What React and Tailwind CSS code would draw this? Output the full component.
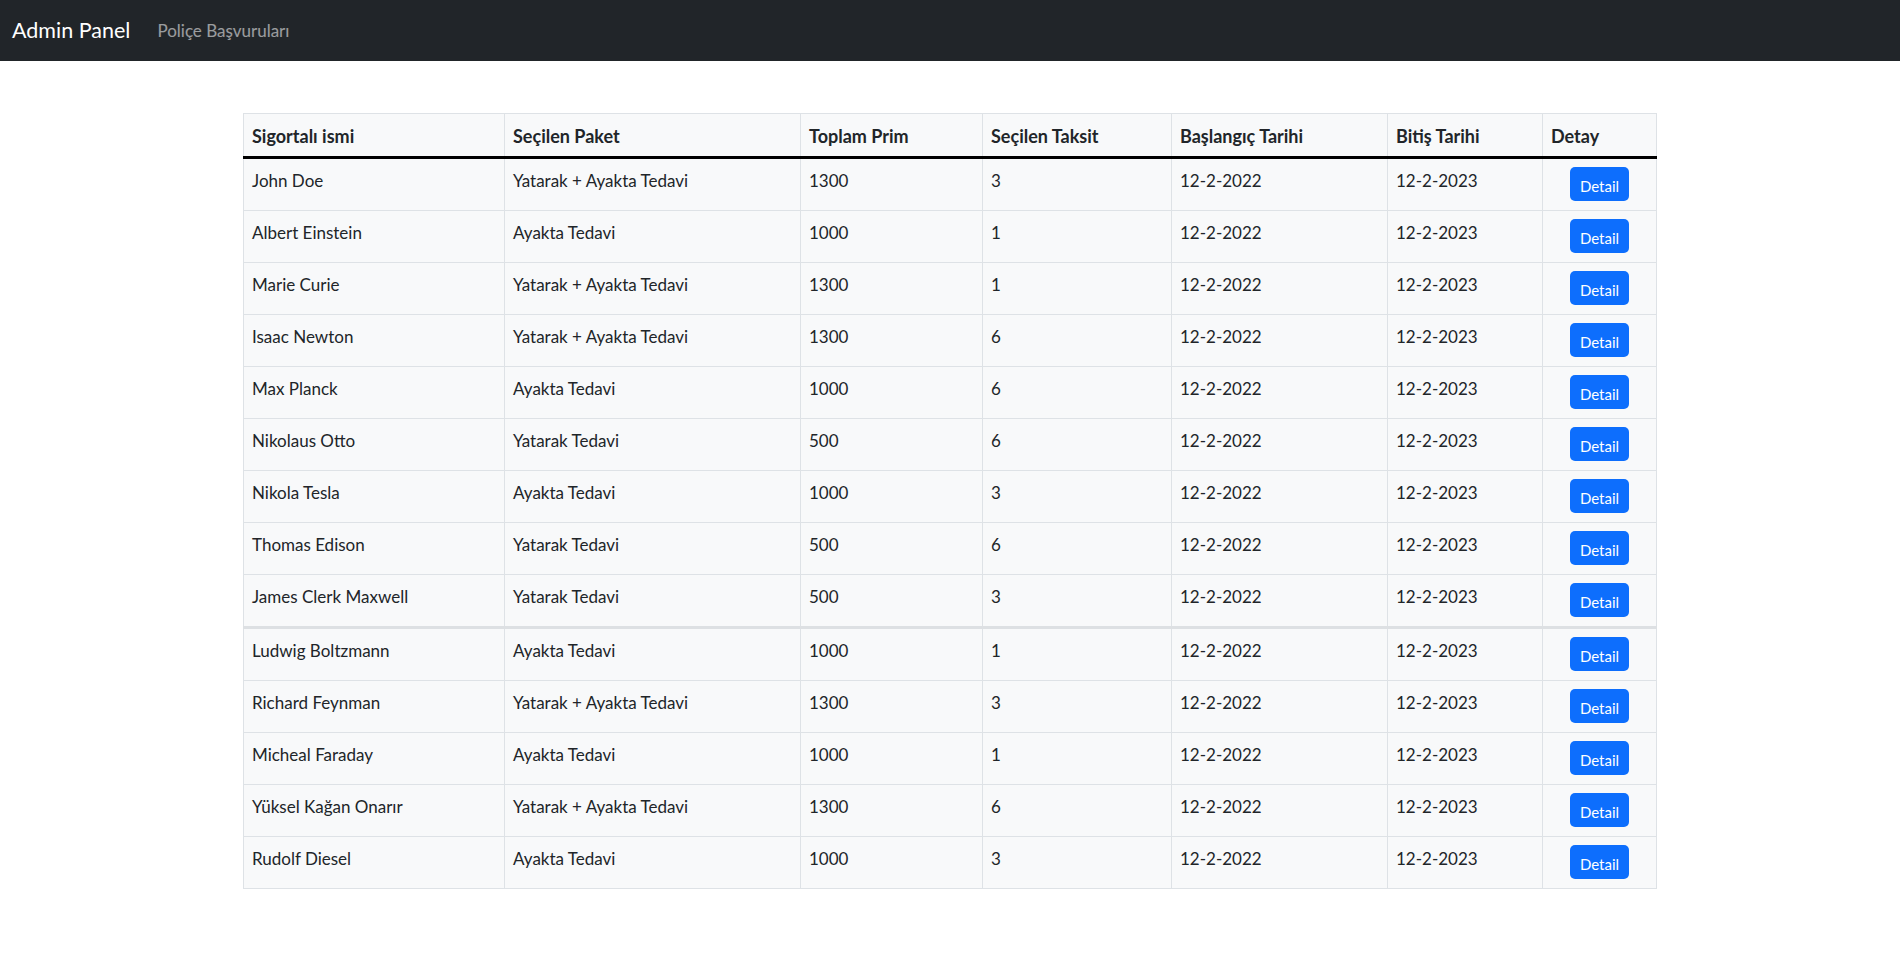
const ROWS = [
  ["John Doe", "Yatarak + Ayakta Tedavi", "1300", "3"],
  ["Albert Einstein", "Ayakta Tedavi", "1000", "1"],
  ["Marie Curie", "Yatarak + Ayakta Tedavi", "1300", "1"],
  ["Isaac Newton", "Yatarak + Ayakta Tedavi", "1300", "6"],
  ["Max Planck", "Ayakta Tedavi", "1000", "6"],
  ["Nikolaus Otto", "Yatarak Tedavi", "500", "6"],
  ["Nikola Tesla", "Ayakta Tedavi", "1000", "3"],
  ["Thomas Edison", "Yatarak Tedavi", "500", "6"],
  ["James Clerk Maxwell", "Yatarak Tedavi", "500", "3"],
  ["Ludwig Boltzmann", "Ayakta Tedavi", "1000", "1"],
  ["Richard Feynman", "Yatarak + Ayakta Tedavi", "1300", "3"],
  ["Micheal Faraday", "Ayakta Tedavi", "1000", "1"],
  ["Yüksel Kağan Onarır", "Yatarak + Ayakta Tedavi", "1300", "6"],
  ["Rudolf Diesel", "Ayakta Tedavi", "1000", "3"],
];

const HEADERS = [
  ["Sigortalı ismi", "w-[261px]"],
  ["Seçilen Paket", "w-[296px]"],
  ["Toplam Prim", "w-[182px]"],
  ["Seçilen Taksit", "w-[189px]"],
  ["Başlangıç Tarihi", "w-[216px]"],
  ["Bitiş Tarihi", "w-[155px]"],
  ["Detay", "w-[114px]"],
];

export default function App() {
  return (
    <div className="min-h-screen bg-white font-['Lato','Liberation_Sans',sans-serif] text-[#212529]">
      {/* navbar */}
      <nav className="h-[61px] bg-[#212529] flex items-center px-3">
        <span className="text-[21.5px] text-white mr-[27px]">Admin Panel</span>
        <span className="text-[17px] text-white/55">Poliçe Başvuruları</span>
      </nav>

      <main className="pt-[52px] pb-10">
        <table className="mx-auto w-[1413px] table-fixed border-collapse bg-[#f8f9fa] text-[17px] leading-6">
          <thead>
            <tr className="border-b-[3px] border-b-black">
              {HEADERS.map(([h, w]) => (
                <th
                  key={h}
                  className={`${w} border border-[#dee2e6] border-b-black px-2 pt-[10px] pb-[8px] text-left text-[18px] font-bold`}
                >
                  {h}
                </th>
              ))}
            </tr>
          </thead>
          <tbody>
            {ROWS.map((r, i) => (
              <tr
                key={r[0]}
                className={i === 8 ? "border-b-[3px] border-b-[#dde0e3]" : ""}
              >
                <Td>{r[0]}</Td>
                <Td>{r[1]}</Td>
                <Td>{r[2]}</Td>
                <Td>{r[3]}</Td>
                <Td>12-2-2022</Td>
                <Td>12-2-2023</Td>
                <td className="border border-[#dee2e6] px-2 pt-[8px] pb-[9px] text-center align-top">
                  <button className="h-[34px] w-[59px] rounded-[5px] bg-[#0d6efd] pt-[3px] text-[15px] text-white">
                    Detail
                  </button>
                </td>
              </tr>
            ))}
          </tbody>
        </table>
      </main>
    </div>
  );
}

function Td({ children }) {
  return (
    <td className="border border-[#dee2e6] px-2 pt-[10px] pb-[17px] align-top">{children}</td>
  );
}
